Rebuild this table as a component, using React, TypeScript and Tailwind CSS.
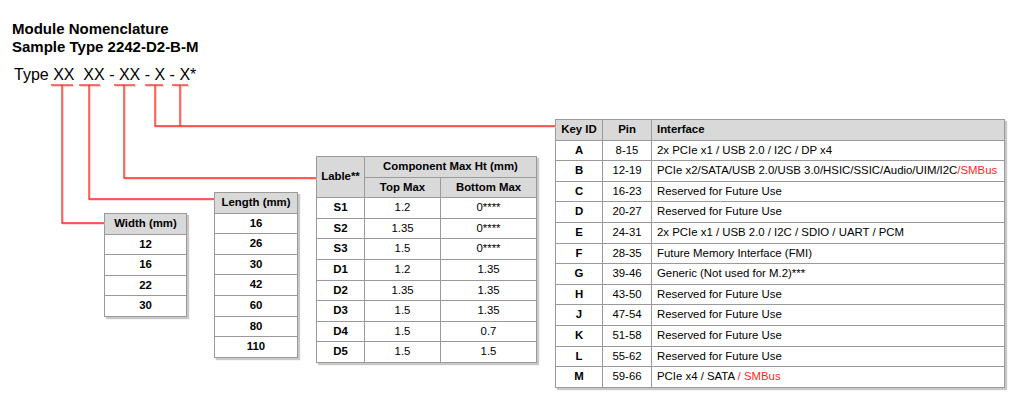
import React from "react";

const B = "border-r border-b border-[#9a9a9a]";
const cellC = `${B} flex items-center justify-center`;
const cellL = `${B} flex items-center pl-[5px]`;
const head = "bg-[#d9d9d9] font-bold";

const KEYS: [string, string, React.ReactNode][] = [
  ["A", "8-15", "2x PCIe x1 / USB 2.0 / I2C / DP x4"],
  [
    "B",
    "12-19",
    <span>
      PCIe x2/SATA/USB 2.0/USB 3.0/HSIC/SSIC/Audio/UIM/I2C
      <span className="text-[#ff1f1f]">/SMBus</span>
    </span>,
  ],
  ["C", "16-23", "Reserved for Future Use"],
  ["D", "20-27", "Reserved for Future Use"],
  ["E", "24-31", "2x PCIe x1 / USB 2.0 / I2C / SDIO / UART / PCM"],
  ["F", "28-35", "Future Memory Interface (FMI)"],
  ["G", "39-46", "Generic (Not used for M.2)***"],
  ["H", "43-50", "Reserved for Future Use"],
  ["J", "47-54", "Reserved for Future Use"],
  ["K", "51-58", "Reserved for Future Use"],
  ["L", "55-62", "Reserved for Future Use"],
  [
    "M",
    "59-66",
    <span>
      {"PCIe x4 / SATA "}
      <span className="text-[#ff1f1f]">/ SMBus</span>
    </span>,
  ],
];

const LABLES = [
  ["S1", "1.2", "0****"],
  ["S2", "1.35", "0****"],
  ["S3", "1.5", "0****"],
  ["D1", "1.2", "1.35"],
  ["D2", "1.35", "1.35"],
  ["D3", "1.5", "1.35"],
  ["D4", "1.5", "0.7"],
  ["D5", "1.5", "1.5"],
];

const tableBox =
  "grid auto-rows-[20.6px] border-l border-t border-[#9a9a9a] shadow-[2px_2px_1px_#c8c8c8] text-[11.4px] leading-none";

function SimpleTable({ title, rows, w }: { title: string; rows: string[]; w: string }) {
  return (
    <div className={`${tableBox} ${w} font-bold`}>
      <div className={`${cellC} ${head}`}>{title}</div>
      {rows.map((r) => (
        <div key={r} className={cellC}>
          {r}
        </div>
      ))}
    </div>
  );
}

function Lines() {
  const red = "#ff2a2a";
  const pink = "#f7b3b3";
  const segs: [number, number][] = [
    [51, 73],
    [79, 100],
    [114, 135],
    [145, 163],
    [172, 188],
  ];
  const paths = [
    "M62 85 V223 H104",
    "M89 85 V199 H214",
    "M124 85 V178 H316",
    "M155 85 V126 H555",
    "M180 85 V126",
  ];
  return (
    <svg
      className="absolute left-0 top-0 pointer-events-none"
      width={1033}
      height={410}
      viewBox="0 0 1033 410"
    >
      <g fill="none" stroke={pink} strokeWidth={1.2} transform="translate(1 1)">
        {segs.map(([a, b]) => (
          <path key={a} d={`M${a} 85 H${b}`} />
        ))}
        {paths.map((d) => (
          <path key={d} d={d} />
        ))}
      </g>
      <g fill="none" stroke={red} strokeWidth={1.3}>
        {segs.map(([a, b]) => (
          <path key={a} d={`M${a} 85 H${b}`} />
        ))}
        {paths.map((d) => (
          <path key={d} d={d} />
        ))}
      </g>
    </svg>
  );
}

export default function App() {
  return (
    <div className="relative w-[1033px] h-[410px] bg-white text-black font-['Liberation_Sans',Arial,sans-serif] overflow-hidden">
      <div className="h-[119px] pl-[12px] pt-[20px]">
        <div className="text-[15px] leading-[18px] font-bold">
          <div>Module Nomenclature</div>
          <div>Sample Type 2242-D2-B-M</div>
        </div>
        <div className="mt-[10px] pl-[2px] text-[16px] leading-[18px] whitespace-pre">
          {"Type XX  XX - XX - X - X*"}
        </div>
      </div>

      <div className="flex items-start pl-[104px]">
        <div className="mt-[94px]">
          <SimpleTable title="Width (mm)" rows={["12", "16", "22", "30"]} w="grid-cols-[82px]" />
        </div>
        <div className="mt-[73px] ml-[27px]">
          <SimpleTable
            title="Length (mm)"
            rows={["16", "26", "30", "42", "60", "80", "110"]}
            w="grid-cols-[83px]"
          />
        </div>
        <div className="mt-[37px] ml-[18px]">
          <div className={`${tableBox} grid-cols-[48px_76px_96px]`}>
            <div className={`${cellC} ${head} row-span-2`}>Lable**</div>
            <div className={`${cellC} ${head} col-span-2`}>Component Max Ht (mm)</div>
            <div className={`${cellC} ${head}`}>Top Max</div>
            <div className={`${cellC} ${head}`}>Bottom Max</div>
            {LABLES.map(([a, b, c]) => (
              <React.Fragment key={a}>
                <div className={`${cellC} font-bold`}>{a}</div>
                <div className={cellC}>{b}</div>
                <div className={cellC}>{c}</div>
              </React.Fragment>
            ))}
          </div>
        </div>
        <div className="ml-[18px]">
          <div className={`${tableBox} grid-cols-[47px_49px_353px]`}>
            <div className={`${cellC} ${head}`}>Key ID</div>
            <div className={`${cellC} ${head}`}>Pin</div>
            <div className={`${cellL} ${head}`}>Interface</div>
            {KEYS.map(([k, p, i]) => (
              <React.Fragment key={k}>
                <div className={`${cellC} font-bold`}>{k}</div>
                <div className={cellC}>{p}</div>
                <div className={`${cellL} whitespace-pre`}>{i}</div>
              </React.Fragment>
            ))}
          </div>
        </div>
      </div>
      <Lines />
    </div>
  );
}
